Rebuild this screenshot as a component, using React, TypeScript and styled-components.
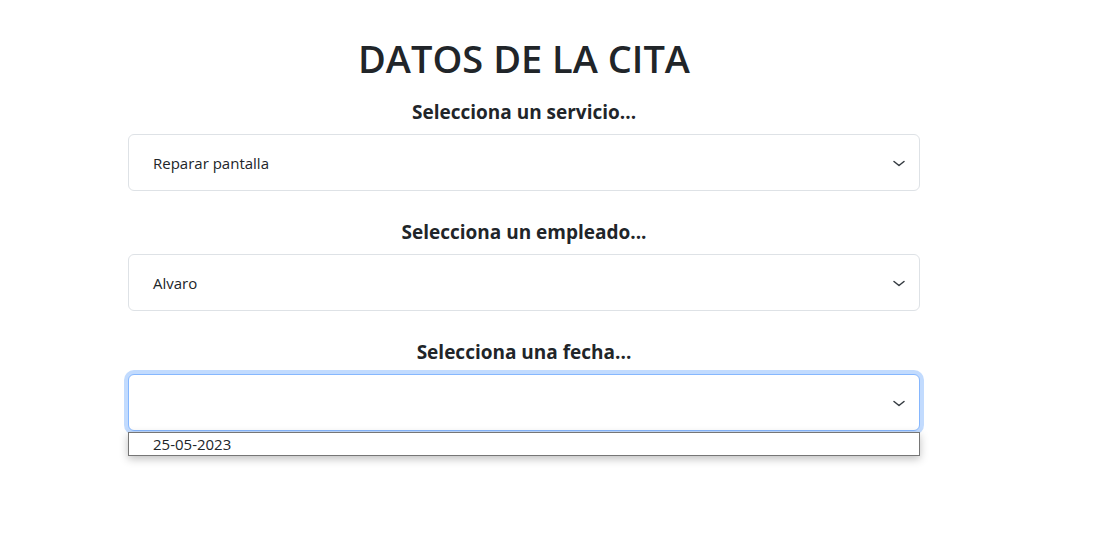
import React from "react";
import styled, { createGlobalStyle } from "styled-components";

const Global = createGlobalStyle`
  html, body { margin: 0; padding: 0; background: #fff; }
  body { font-family: "Open Sans", "Noto Sans", sans-serif; color: #212529; }
`;

const Page = styled.div`
  width: 1095px;
  height: 553px;
  box-sizing: border-box;
  padding-left: 128px;
  padding-top: 34px;
`;

const Form = styled.div`
  width: 792px;
  display: flex;
  flex-direction: column;
  align-items: stretch;
`;

const Title = styled.h1`
  margin: 0 0 18px 0;
  font-size: 38px;
  line-height: 48px;
  font-weight: 600;
  text-align: center;
`;

const Group = styled.div`
  display: flex;
  flex-direction: column;
  margin-bottom: 29px;
`;

const Label = styled.div`
  font-size: 19px;
  line-height: 24px;
  font-weight: 700;
  text-align: center;
  margin-bottom: 10px;
`;

const SelectWrap = styled.div`
  position: relative;
`;

const SelectBox = styled.div<{ $focused?: boolean }>`
  box-sizing: border-box;
  height: 57px;
  display: flex;
  align-items: center;
  justify-content: space-between;
  padding: 0 12px 0 24px;
  font-size: 15px;
  border: 1px solid ${(p) => (p.$focused ? "#86b7fe" : "#dee2e6")};
  border-radius: 6px;
  background: #fff;
  box-shadow: ${(p) => (p.$focused ? "0 0 0 4px rgba(13,110,253,.25)" : "none")};
`;

const Chevron = () => (
  <svg width="16" height="12" viewBox="0 0 16 12" fill="none">
    <path d="M3 4.5 L8 8.5 L13 4.5" stroke="#343a40" strokeWidth="1.5" strokeLinecap="round" strokeLinejoin="round" />
  </svg>
);

const Dropdown = styled.div`
  position: absolute;
  left: 0;
  right: 0;
  top: calc(100% + 1px);
  box-sizing: border-box;
  height: 24px;
  border: 1px solid #767676;
  background: #fff;
  box-shadow: 0 3px 8px rgba(0, 0, 0, 0.25);
  font-size: 15px;
  line-height: 22px;
  padding-left: 24px;
  color: #212529;
`;

const Field = ({ label, value, focused, option }: { label: string; value: string; focused?: boolean; option?: string }) => (
  <Group>
    <Label>{label}</Label>
    <SelectWrap>
      <SelectBox $focused={focused}>
        <span>{value}</span>
        <Chevron />
      </SelectBox>
      {option && <Dropdown>{option}</Dropdown>}
    </SelectWrap>
  </Group>
);

export default function App() {
  return (
    <>
      <Global />
      <Page>
        <Form>
          <Title>DATOS DE LA CITA</Title>
          <Field label="Selecciona un servicio..." value="Reparar pantalla" />
          <Field label="Selecciona un empleado..." value="Alvaro" />
          <Field label="Selecciona una fecha..." value="" focused option="25-05-2023" />
        </Form>
      </Page>
    </>
  );
}
